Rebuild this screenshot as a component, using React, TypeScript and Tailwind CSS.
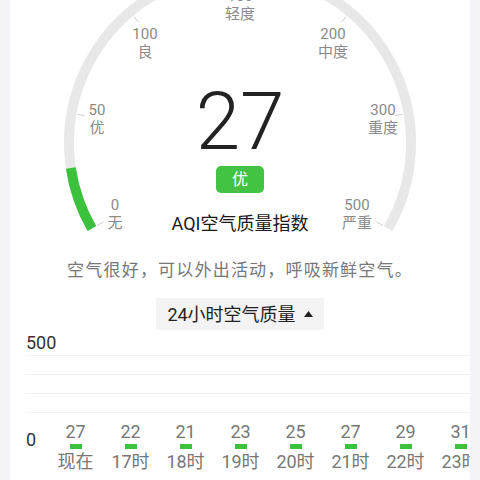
import React from "react";

const CX = 230;
const CY = 143;
const R = 171;

function pt(deg: number, r: number) {
  const a = (deg * Math.PI) / 180;
  return { x: CX + r * Math.sin(a), y: CY - r * Math.cos(a) };
}

const tickAngles = [-120, -80, -40, 0, 40, 80, 120];

function Gauge() {
  const s = pt(-120, R);
  const e = pt(120, R);
  const g = pt(-98.4, R);
  return (
    <svg width="460" height="240" viewBox="0 0 460 240" className="absolute left-0 top-0">
      <path
        d={`M ${s.x} ${s.y} A ${R} ${R} 0 1 1 ${e.x} ${e.y}`}
        fill="none"
        stroke="#e8e8e8"
        strokeWidth="10"
      />
      <path
        d={`M ${s.x} ${s.y} A ${R} ${R} 0 0 1 ${g.x} ${g.y}`}
        fill="none"
        stroke="#3cc13c"
        strokeWidth="10"
      />
      {tickAngles.map((a) => {
        const p1 = pt(a, 158);
        const p2 = pt(a, 165);
        return <line key={a} x1={p1.x} y1={p1.y} x2={p2.x} y2={p2.y} stroke="#cfcfcf" strokeWidth="1" />;
      })}
    </svg>
  );
}

function Label({ n, t, cls }: { n: string; t: string; cls: string }) {
  return (
    <div className={`absolute -translate-x-1/2 -translate-y-1/2 flex flex-col items-center text-[15px] leading-[18px] text-[#8a8a8a] ${cls}`}>
      <span>{n}</span>
      <span>{t}</span>
    </div>
  );
}

const hours = [
  { v: "27", t: "现在" },
  { v: "22", t: "17时" },
  { v: "21", t: "18时" },
  { v: "23", t: "19时" },
  { v: "25", t: "20时" },
  { v: "27", t: "21时" },
  { v: "29", t: "22时" },
  { v: "31", t: "23时" },
];

export default function App() {
  return (
    <div className="w-[480px] h-[480px] overflow-hidden bg-[#f4f4f8] pl-[10px] pr-[10px] font-['Roboto','Noto_Sans_CJK_SC',sans-serif]">
      <div className="bg-white h-full w-[460px] overflow-hidden flex flex-col">
        <div className="relative h-[240px] shrink-0 flex flex-col items-center pt-[82px]">
          <Gauge />
          <Label n="0" t="无" cls="left-[105px] top-[214px]" />
          <Label n="50" t="优" cls="left-[87px] top-[119px]" />
          <Label n="100" t="良" cls="left-[135px] top-[43px]" />
          <Label n="150" t="轻度" cls="left-[230px] top-[5px]" />
          <Label n="200" t="中度" cls="left-[323px] top-[43px]" />
          <Label n="300" t="重度" cls="left-[373px] top-[119px]" />
          <Label n="500" t="严重" cls="left-[347px] top-[214px]" />
          <div className="relative text-[80px] leading-[80px] font-light text-[#222]">27</div>
          <div className="relative mt-[4px] w-[48px] h-[27px] rounded-[5px] bg-[#44c244] text-white text-[16px] flex items-center justify-center">
            优
          </div>
          <div className="relative mt-[19px] text-[18px] leading-[24px] text-[#1a1a1a]">AQI空气质量指数</div>
        </div>
        <div className="mt-[18px] text-center text-[17px] leading-[24px] tracking-[1.2px] text-[#777]">
          空气很好，可以外出活动，呼吸新鲜空气。
        </div>
        <div className="mt-[16px] flex justify-center">
          <div className="w-[168px] h-[32px] rounded-[2px] bg-[#f3f3f3] flex items-center justify-center gap-[8px] text-[18px] text-[#222]">
            <span>24小时空气质量</span>
            <svg width="9" height="6" viewBox="0 0 9 6">
              <path d="M4.5 0 L9 6 L0 6 Z" fill="#222" />
            </svg>
          </div>
        </div>
        <div className="mt-[3px] pl-[16px] text-[18px] leading-[20px] text-[#333]">500</div>
        <div className="mt-[2px] ml-[16px] flex flex-col">
          <div className="h-[19px] border-t border-[#f2f2f2]" />
          <div className="h-[19px] border-t border-[#f2f2f2]" />
          <div className="h-[19px] border-t border-[#f2f2f2]" />
          <div className="h-[10px] border-t border-[#f2f2f2]" />
        </div>
        <div className="flex pl-[16px]">
          <div className="w-[22px] shrink-0 mt-[8px] text-[18px] leading-[20px] text-[#333]">0</div>
          {hours.map((h, i) => (
            <div key={i} className="w-[55px] shrink-0 flex flex-col items-center">
              <div className="text-[18px] leading-[20px] text-[#777]">{h.v}</div>
              <div className="mt-[2px] w-[12px] h-[5px] bg-[#3cc13c]" />
              <div className="mt-[2px] text-[18px] leading-[22px] text-[#777]">{h.t}</div>
            </div>
          ))}
        </div>
      </div>
    </div>
  );
}
